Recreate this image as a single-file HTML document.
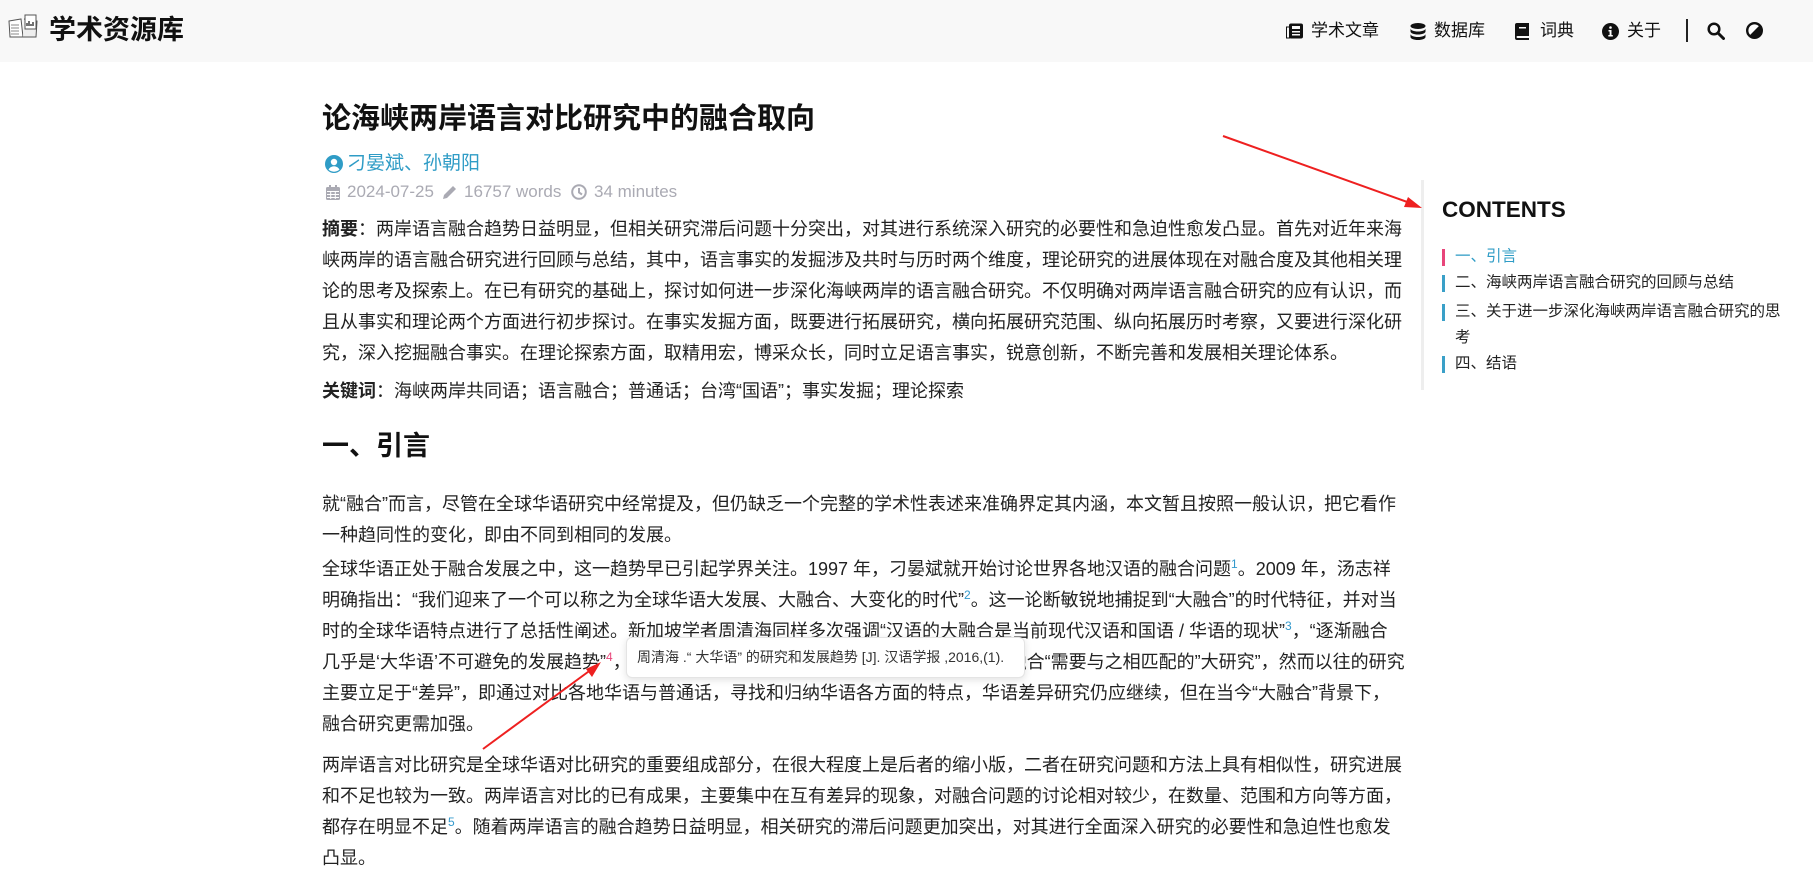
<!DOCTYPE html>
<html><head><meta charset="utf-8"><style>
*{margin:0;padding:0;box-sizing:border-box}
body{width:1813px;height:877px;overflow:hidden;background:#fff;font-family:"Liberation Sans","Noto Sans CJK SC",sans-serif;color:#222;position:relative}
.hdr{position:absolute;left:0;top:0;width:1813px;height:62px;background:#f8f8f8}
.logo{position:absolute;left:49px;top:12px;font-size:27px;font-weight:bold;line-height:36px;color:#111}
.nav{position:absolute;top:18px;font-size:17px;line-height:26px;color:#111;white-space:nowrap}
.nav svg{position:absolute;top:5px}
.abs{position:absolute;white-space:nowrap}
.p{font-size:18px;line-height:31px;color:#222;left:322px}
h1{position:absolute;left:322px;top:99px;font-size:29px;line-height:40px;font-weight:bold;color:#111}
h2{position:absolute;left:322px;top:426px;font-size:27px;line-height:40px;font-weight:bold;color:#111}
sup{font-size:12px;color:#3399cc;vertical-align:7px;line-height:0}
.toc{position:absolute;left:1421px;top:180px;width:3px;height:210px;background:#eee}
.ti{position:absolute;left:1442px;font-size:15.5px;line-height:26px;white-space:nowrap;color:#222}
.ti i{position:absolute;left:0;top:5px;width:3px;height:17px;background:#3aa0c8}
.ti span{position:absolute;left:13px}
.meta{position:absolute;top:180px;font-size:17px;line-height:24px;color:#aaaab3;white-space:nowrap}
</style></head><body>
<div class="hdr"></div>
<svg style="position:absolute;left:8px;top:13px" width="31" height="26" viewBox="0 0 31 26"><path d="M1 8 L13 6 L15 24 L2 24 Z" fill="#fff" stroke="#555"/><path d="M15 24 L28 24 L29 8 L16 6" fill="#eee" stroke="#555"/><rect x="17" y="2" width="11" height="14" fill="#fff" stroke="#555"/><path d="M19 13v-3M21 13v-5M23 13v-2M25 13v-4" stroke="#444" stroke-width="1.5"/><path d="M3 12h8M3 15h8M3 18h8M3 21h8" stroke="#888"/></svg>
<div class="logo">学术资源库</div>

<div class="nav" style="left:1286px"><svg width="18" height="16" viewBox="0 0 18 16"><rect x="3" y="0.5" width="14" height="15" rx="2" fill="#111"/><rect x="0.5" y="4" width="3" height="11" fill="none" stroke="#111"/><rect x="6" y="3" width="8" height="3" fill="#f8f8f8"/><rect x="6" y="8" width="8" height="1.5" fill="#f8f8f8"/><rect x="6" y="11" width="8" height="1.5" fill="#f8f8f8"/></svg><span style="margin-left:25px">学术文章</span></div>
<div class="nav" style="left:1410px"><svg width="16" height="17" viewBox="0 0 16 17"><ellipse cx="8" cy="3" rx="7.5" ry="3" fill="#111"/><path d="M0.5 5.5v3c0 1.7 3.4 3 7.5 3s7.5-1.3 7.5-3v-3c0 1.7-3.4 3-7.5 3s-7.5-1.3-7.5-3z" fill="#111"/><path d="M0.5 11v3c0 1.7 3.4 3 7.5 3s7.5-1.3 7.5-3v-3c0 1.7-3.4 3-7.5 3s-7.5-1.3-7.5-3z" fill="#111"/></svg><span style="margin-left:24px">数据库</span></div>
<div class="nav" style="left:1515px"><svg width="14" height="17" viewBox="0 0 14 17"><path d="M2 0h12v13H2.5a1 1 0 0 0 0 2H14v2H2a2 2 0 0 1-2-2V2a2 2 0 0 1 2-2z" fill="#111"/><rect x="4" y="4" width="7" height="1.5" fill="#f8f8f8"/></svg><span style="margin-left:25px">词典</span></div>
<div class="nav" style="left:1602px"><svg width="17" height="17" viewBox="0 0 17 17"><circle cx="8.5" cy="8.5" r="8.5" fill="#111"/><circle cx="8.5" cy="4.5" r="1.3" fill="#fff"/><path d="M6.5 7h3v5h1.3v1.5H6.3V12h1.3V8.5H6.5z" fill="#fff"/></svg><span style="margin-left:25px">关于</span></div>
<div style="position:absolute;left:1686px;top:19px;width:1.5px;height:23px;background:#222"></div>
<svg style="position:absolute;left:1707px;top:22px" width="18" height="18" viewBox="0 0 18 18"><circle cx="7" cy="7" r="5.3" fill="none" stroke="#111" stroke-width="2.5"/><path d="M11 11l5.5 5.5" stroke="#111" stroke-width="3" stroke-linecap="round"/></svg>
<svg style="position:absolute;left:1746px;top:22px" width="17" height="17" viewBox="0 0 17 17"><circle cx="8.5" cy="8.5" r="7.3" fill="#fff" stroke="#111" stroke-width="2.4"/><path d="M3.3 13.7A7.3 7.3 0 0 0 13.7 3.3Z" fill="#111"/></svg>

<h1>论海峡两岸语言对比研究中的融合取向</h1>
<div class="abs" style="left:325px;top:151px;font-size:19px;line-height:26px;color:#2f9cc6"><svg style="position:absolute;left:0;top:4px" width="18" height="18" viewBox="0 0 18 18"><circle cx="9" cy="9" r="9" fill="#2f9cc6"/><circle cx="9" cy="7" r="3.2" fill="#fff"/><path d="M3.5 14.5c1.3-2.2 3.2-3.3 5.5-3.3s4.2 1.1 5.5 3.3A8 8 0 0 1 3.5 14.5z" fill="#fff"/></svg><span style="margin-left:22px">刁晏斌、孙朝阳</span></div>

<svg style="position:absolute;left:326px;top:185px" width="14" height="15" viewBox="0 0 14 15"><rect x="0" y="2" width="14" height="13" rx="1.5" fill="#aaaab3"/><rect x="3" y="0" width="2" height="4" fill="#aaaab3"/><rect x="9" y="0" width="2" height="4" fill="#aaaab3"/><path d="M1 6.5h12M1 9.5h12M1 12.5h12M4.7 6v8M9.3 6v8" stroke="#fff" stroke-width="1"/></svg>
<div class="meta" style="left:347px">2024-07-25</div>
<svg style="position:absolute;left:442px;top:184px" width="15" height="16" viewBox="0 0 15 16"><path d="M1 15l1-4L11 2l3 3L5 14z" fill="#aaaab3"/></svg>
<div class="meta" style="left:464px">16757 words</div>
<svg style="position:absolute;left:571px;top:184px" width="16" height="16" viewBox="0 0 16 16"><circle cx="8" cy="8" r="6.8" fill="none" stroke="#aaaab3" stroke-width="2"/><path d="M8 4v4.5l3 2" fill="none" stroke="#aaaab3" stroke-width="2"/></svg>
<div class="meta" style="left:594px">34 minutes</div>

<div class="abs p" style="top:214px"><b>摘要</b>：两岸语言融合趋势日益明显，但相关研究滞后问题十分突出，对其进行系统深入研究的必要性和急迫性愈发凸显。首先对近年来海<br>峡两岸的语言融合研究进行回顾与总结，其中，语言事实的发掘涉及共时与历时两个维度，理论研究的进展体现在对融合度及其他相关理<br>论的思考及探索上。在已有研究的基础上，探讨如何进一步深化海峡两岸的语言融合研究。不仅明确对两岸语言融合研究的应有认识，而<br>且从事实和理论两个方面进行初步探讨。在事实发掘方面，既要进行拓展研究，横向拓展研究范围、纵向拓展历时考察，又要进行深化研<br>究，深入挖掘融合事实。在理论探索方面，取精用宏，博采众长，同时立足语言事实，锐意创新，不断完善和发展相关理论体系。</div>
<div class="abs p" style="top:376px"><b>关键词</b>：海峡两岸共同语；语言融合；普通话；台湾“国语”；事实发掘；理论探索</div>
<h2>一、引言</h2>
<div class="abs p" style="top:489px">就“融合”而言，尽管在全球华语研究中经常提及，但仍缺乏一个完整的学术性表述来准确界定其内涵，本文暂且按照一般认识，把它看作<br>一种趋同性的变化，即由不同到相同的发展。</div>
<div class="abs p" style="top:554px">全球华语正处于融合发展之中，这一趋势早已引起学界关注。1997 年，刁晏斌就开始讨论世界各地汉语的融合问题<sup>1</sup>。2009 年，汤志祥<br>明确指出：“我们迎来了一个可以称之为全球华语大发展、大融合、大变化的时代”<sup>2</sup>。这一论断敏锐地捕捉到“大融合”的时代特征，并对当<br>时的全球华语特点进行了总括性阐述。新加坡学者周清海同样多次强调“汉语的大融合是当前现代汉语和国语 / 华语的现状”<sup>3</sup>，“逐渐融合<br>几乎是‘大华语’不可避免的发展趋势”<sup style="color:#e8457a">4</sup>，大华语的融合研究迫切需要相应的理论和方法，融合“需要与之相匹配的”大研究”，然而以往的研究<br>主要立足于“差异”，即通过对比各地华语与普通话，寻找和归纳华语各方面的特点，华语差异研究仍应继续，但在当今“大融合”背景下，<br>融合研究更需加强。</div>
<div class="abs p" style="top:750px">两岸语言对比研究是全球华语对比研究的重要组成部分，在很大程度上是后者的缩小版，二者在研究问题和方法上具有相似性，研究进展<br>和不足也较为一致。两岸语言对比的已有成果，主要集中在互有差异的现象，对融合问题的讨论相对较少，在数量、范围和方向等方面，<br>都存在明显不足<sup>5</sup>。随着两岸语言的融合趋势日益明显，相关研究的滞后问题更加突出，对其进行全面深入研究的必要性和急迫性也愈发<br>凸显。</div>

<div class="abs" style="left:626px;top:637px;width:399px;height:41px;background:#fff;border:1px solid #e4e4e4;border-radius:6px;box-shadow:0 2px 8px rgba(0,0,0,.12);font-size:14px;line-height:39px;padding-left:10px;color:#333">周清海 .“ 大华语” 的研究和发展趋势 [J]. 汉语学报 ,2016,(1).</div>

<div class="toc"></div>
<div class="abs" style="left:1442px;top:195px;font-size:22.5px;line-height:30px;font-weight:bold;color:#111">CONTENTS</div>
<div class="ti" style="top:244px;color:#2f9cc6"><i style="background:#e8457a"></i><span>一、引言</span></div>
<div class="ti" style="top:270px"><i></i><span>二、海峡两岸语言融合研究的回顾与总结</span></div>
<div class="ti" style="top:299px"><i></i><span>三、关于进一步深化海峡两岸语言融合研究的思<br>考</span></div>
<div class="ti" style="top:351px"><i></i><span>四、结语</span></div>

<svg style="position:absolute;left:0;top:0" width="1813" height="877"><g stroke="#ee2020" stroke-width="2" fill="#ee2020"><line x1="1223" y1="136" x2="1410" y2="203"/><path d="M1422 208l-18-1 4-10z" stroke="none"/><line x1="483" y1="749" x2="592" y2="669"/><path d="M601 662l-9 15-6-8z" stroke="none"/></g></svg>
</body></html>
